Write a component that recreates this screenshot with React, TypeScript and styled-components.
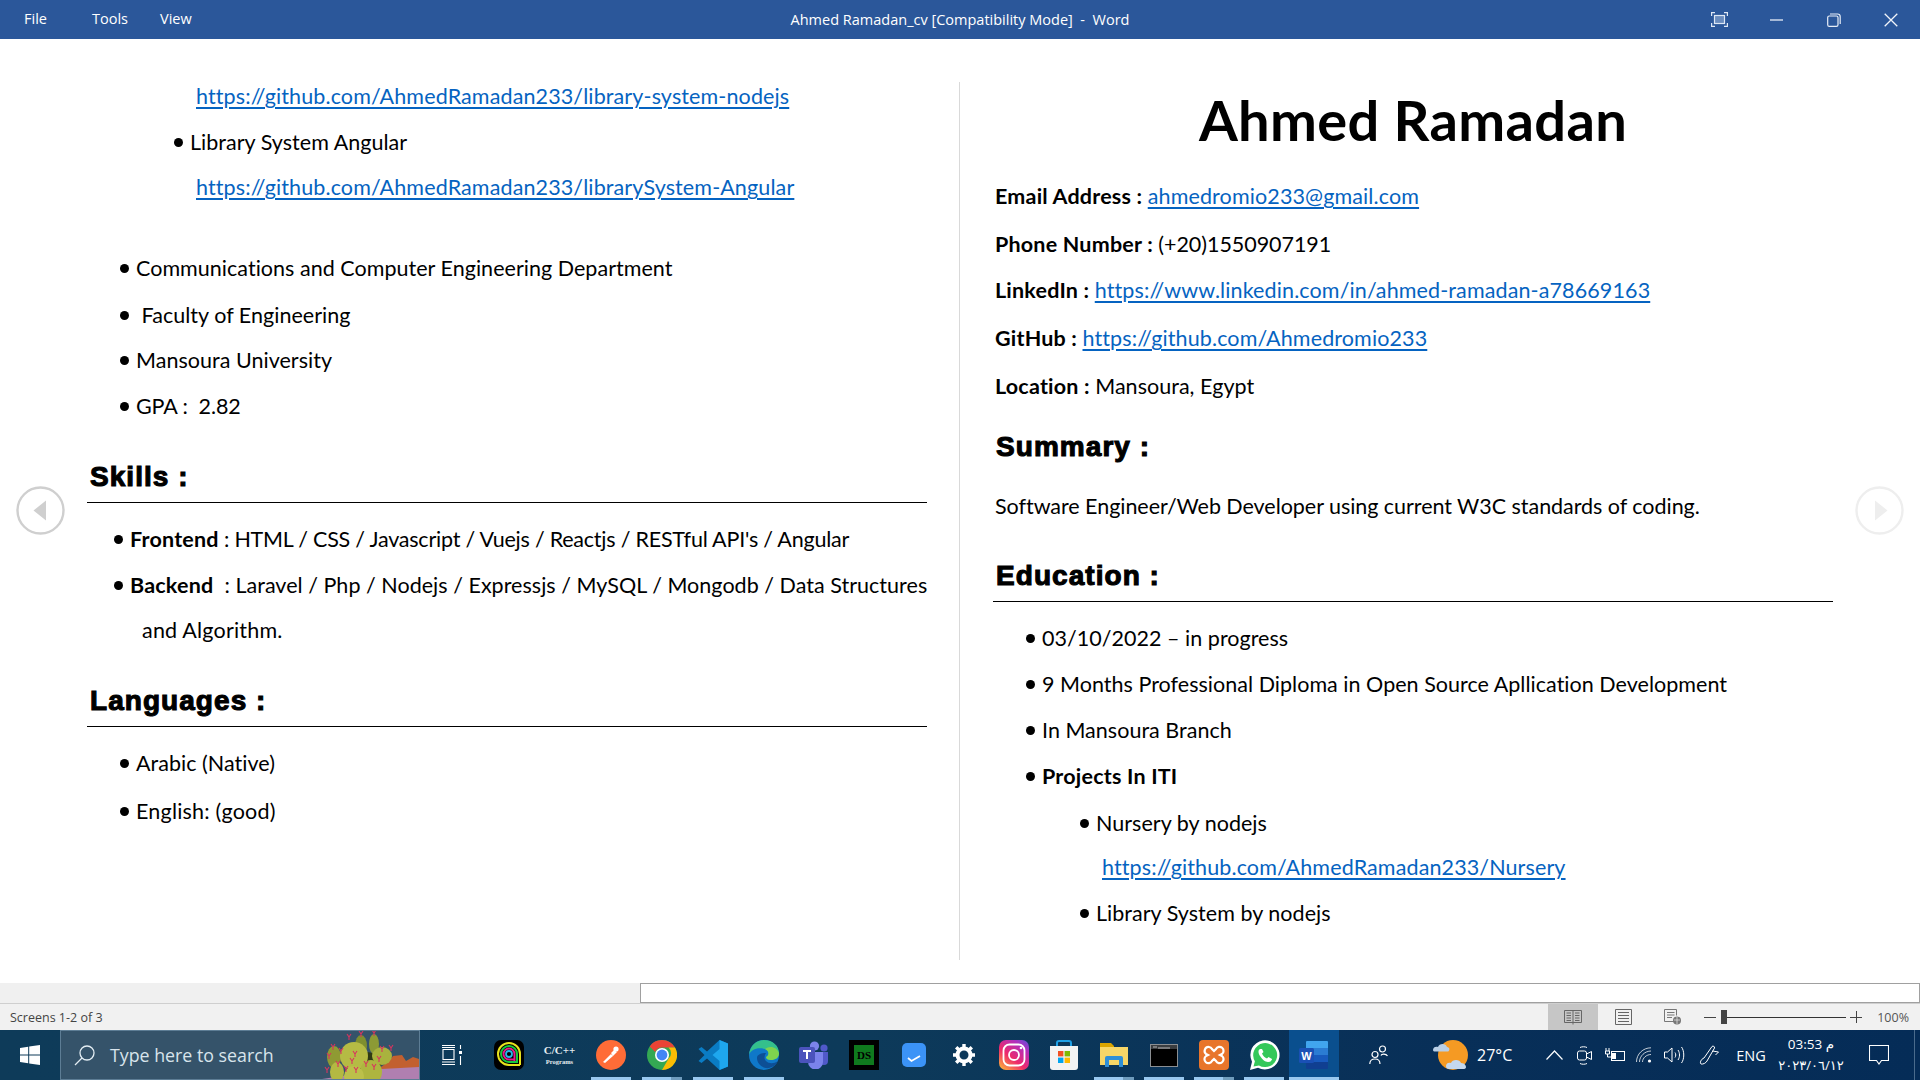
import React from 'react'
import styled, { createGlobalStyle } from 'styled-components'

const GlobalStyle = createGlobalStyle`
  html, body { margin: 0; padding: 0; background: #fff; overflow: hidden; }
  * { box-sizing: border-box; }
`

const Screen = styled.div`
  width: 1920px;
  height: 1080px;
  display: flex;
  flex-direction: column;
  position: relative;
  font-family: 'Open Sans', sans-serif;
`

const TitleBar = styled.div`
  height: 39px;
  flex: none;
  background: #2b579a;
  color: #fff;
  display: grid;
  grid-template-columns: 1fr auto 1fr;
  align-items: center;
  font-size: 14.5px;
`
const MenuRow = styled.div`
  display: flex;
  padding-left: 24px;
  margin-top: -2px;
`
const MenuItem = styled.span`
  width: 68px;
`
const DocTitle = styled.div`
  white-space: pre;
`
const WindowControls = styled.div`
  display: flex;
  justify-content: flex-end;
  padding-right: 1px;
`
const WindowButton = styled.div`
  width: 57px;
  height: 39px;
  display: flex;
  align-items: center;
  justify-content: center;
`

const Document = styled.div`
  flex: 1;
  display: flex;
  min-height: 0;
  position: relative;
`
const Page = styled.div<{ $left: number; $right: number; $top: number }>`
  padding: ${(p) => p.$top}px ${(p) => p.$right}px 0 ${(p) => p.$left}px;
  width: ${(p) => (p.$left > 50 ? 959 : 960)}px;
  flex: none;
`
const Divider = styled.div`
  width: 1px;
  flex: none;
  margin: 43px 0 23px;
  background: #d9d9d9;
`
const Title = styled.h1`
  margin: 0;
  height: 80px;
  line-height: 80px;
  text-align: center;
  font-family: 'Lato', sans-serif;
  font-weight: 700;
  font-size: 56px;
  letter-spacing: 0.35px;
  color: #000;
`
const Line = styled.div<{ $indent?: number; $gap?: number; $track?: number }>`
  height: 46px;
  line-height: 46px;
  display: flex;
  align-items: center;
  white-space: pre;
  padding-left: ${(p) => p.$indent ?? 2}px;
  margin-top: ${(p) => p.$gap ?? 0}px;
  font-family: 'Lato', sans-serif;
  font-size: 21.5px;
  letter-spacing: ${(p) => p.$track ?? 0.03}px;
  color: #000;
`
const Dot = styled.span`
  width: 9px;
  height: 9px;
  border-radius: 50%;
  background: #000;
  margin-right: 7px;
  flex: none;
`
const Bold = styled.b`
  font-weight: 700;
  letter-spacing: 0.2px;
`
const DocLink = styled.a`
  color: #0563c1;
  text-decoration: underline;
  text-decoration-thickness: 1.5px;
  text-underline-offset: 3px;
  letter-spacing: 0.12px;
  margin-left: 5px;
`
const PlainLink = styled(DocLink)`
  margin-left: 0;
`
const SectionHeading = styled.h2<{ $gap: number; $ruled?: boolean }>`
  margin: ${(p) => p.$gap}px 0 0;
  height: ${(p) => (p.$ruled ? 52 : 50)}px;
  line-height: 52px;
  padding-left: 3px;
  font-family: 'Liberation Sans', Arial, sans-serif;
  font-size: 28px;
  font-weight: 700;
  letter-spacing: 1.05px;
  -webkit-text-stroke: 1.1px #000;
  color: #000;
  border-bottom: ${(p) => (p.$ruled ? '1px solid #000' : 'none')};
`

const PageArrow = styled.div<{ $side: 'left' | 'right' }>`
  position: absolute;
  top: 447px;
  ${(p) => (p.$side === 'left' ? 'left: 16px;' : 'right: 16px;')}
  width: 49px;
  height: 49px;
`

const ScrollRow = styled.div`
  height: 20px;
  flex: none;
  background: #f0f0f0;
  display: flex;
  justify-content: flex-end;
`
const ScrollTrack = styled.div`
  width: 1280px;
  background: #fff;
  border: 1px solid #a0a0a0;
`

const StatusBar = styled.div`
  height: 27px;
  flex: none;
  background: #f1f1f1;
  border-top: 1px solid #cfcfcf;
  display: flex;
  align-items: center;
  font-size: 12.5px;
  color: #444;
`
const StatusText = styled.div`
  padding-left: 10px;
  margin-right: auto;
`
const ViewButton = styled.div<{ $active?: boolean }>`
  width: 50px;
  height: 26px;
  flex: none;
  display: flex;
  align-items: center;
  justify-content: center;
  background: ${(p) => (p.$active ? '#c6c6c6' : 'transparent')};
`
const ZoomGroup = styled.div`
  display: flex;
  flex: none;
  align-items: center;
  margin-left: 6px;
  color: #444;
`
const ZoomSign = styled.span`
  width: 12px;
  height: 1px;
  background: #444;
  position: relative;
`
const ZoomPlus = styled(ZoomSign)`
  margin-left: 4px;
  &::after {
    content: '';
    position: absolute;
    left: 5.5px;
    top: -5.5px;
    width: 1px;
    height: 12px;
    background: #444;
  }
`
const ZoomThumb = styled.span`
  width: 6px;
  height: 14px;
  background: #444;
  margin-left: 5px;
`
const ZoomTrack = styled.span`
  width: 119px;
  height: 1px;
  background: #333;
`
const ZoomValue = styled.span`
  width: 58px;
  text-align: right;
  padding-right: 11px;
  font-size: 12.5px;
  color: #555;
`

const Taskbar = styled.div`
  height: 50px;
  flex: none;
  display: flex;
  align-items: stretch;
  background: linear-gradient(90deg, #0e3b59 0%, #0d3a5a 45%, #082f58 75%, #052c57 100%);
  color: #fff;
`
const StartButton = styled.div`
  width: 60px;
  flex: none;
  display: flex;
  align-items: center;
  justify-content: center;
`
const SearchBox = styled.div`
  width: 360px;
  flex: none;
  position: relative;
  overflow: hidden;
  display: flex;
  align-items: center;
  padding-left: 13px;
  gap: 15px;
  background: #35536a;
  border: 1px solid #5d7d95;
  font-size: 17.8px;
  color: #d8e4ec;
`
const CactusArt = styled.svg`
  position: absolute;
  right: 0;
  top: 0;
`
const TaskTile = styled.div<{ $w?: number; $run?: 'one' | 'stack'; $active?: boolean }>`
  width: ${(p) => p.$w ?? 50}px;
  flex: none;
  display: flex;
  align-items: center;
  justify-content: center;
  position: relative;
  background: ${(p) => (p.$active ? '#0a4f8e' : 'transparent')};
  &::after {
    content: ${(p) => (p.$run || p.$active ? "''" : 'none')};
    position: absolute;
    bottom: 0;
    left: ${(p) => (p.$active ? '0' : 'calc(50% - 20px)')};
    width: ${(p) => (p.$active ? '100%' : '40px')};
    height: 3px;
    background: ${(p) =>
      p.$run === 'stack' ? 'linear-gradient(90deg, #99c8ef 73%, #6f9cbd 73%)' : '#99c8ef'};
  }
`
const CppLabel = styled.div`
  font-family: 'Liberation Serif', serif;
  text-align: center;
  font-weight: 700;
  line-height: 1;
  color: #e7edf1;
  font-size: 11px;
`
const CppSmall = styled.div`
  font-size: 6.5px;
  margin-top: 3px;
`
const TrayTile = styled.div<{ $w: number; $ml?: number }>`
  width: ${(p) => p.$w}px;
  margin-left: ${(p) => p.$ml ?? 0}px;
  flex: none;
  display: flex;
  align-items: center;
  justify-content: center;
  font-size: 14.5px;
`
const TempText = styled(TrayTile)`
  justify-content: flex-start;
  padding-left: 7px;
  font-size: 16px;
`
const Clock = styled(TrayTile)`
  flex-direction: column;
  font-size: 13.5px;
  line-height: 21px;
  font-family: 'Open Sans', 'DejaVu Sans', sans-serif;
`
const ClockDate = styled.span`
  direction: ltr;
  unicode-bidi: plaintext;
  font-size: 13px;
`
const ShowDesktop = styled.div`
  width: 6px;
  flex: none;
  margin-left: 5px;
  border-left: 1px solid #4a6b8c;
`

const Capture = () => (
  <svg width="17" height="15" viewBox="0 0 17 15" fill="none" stroke="#dfe8f5" strokeWidth="1.2">
    <rect x="3.5" y="3.5" width="10" height="8" fill="#a9c1e2" fillOpacity=".5" />
    <path d="M.6 4V.6H4M13 .6h3.4V4M16.4 11v3.4H13M4 14.4H.6V11" />
  </svg>
)
const Minimize = () => (
  <svg width="14" height="4" viewBox="0 0 14 4">
    <path d="M0 2h13" stroke="#e8eef7" strokeWidth="1.3" />
  </svg>
)
const Restore = () => (
  <svg width="14" height="14" viewBox="0 0 14 14" fill="none" stroke="#e8eef7" strokeWidth="1.2">
    <rect x=".7" y="3" width="10.3" height="10.3" rx="1.6" />
    <path d="M3 1h7.5A2.7 2.7 0 0 1 13.2 3.7V11" />
  </svg>
)
const CloseIcon = () => (
  <svg width="14" height="14" viewBox="0 0 14 14" stroke="#f2f5fa" strokeWidth="1.3">
    <path d="M.7.7l12.6 12.6M13.3.7L.7 13.3" />
  </svg>
)

const ArrowGlyph = ({ dir, tone }: { dir: 'left' | 'right'; tone: string }) => (
  <svg width="49" height="49" viewBox="0 0 49 49" fill="none">
    <circle cx="24.5" cy="24.5" r="23" stroke={tone} strokeWidth="2.4" />
    <path d={dir === 'left' ? 'M30 14.5v20L17.5 24.5z' : 'M20 14.5v20l12.5-10z'} fill={tone} />
  </svg>
)

const BookView = () => (
  <svg width="18" height="16" viewBox="0 0 18 16" fill="none" stroke="#666">
    <path d="M.5 1.5h17v12H.5zM9 1.5v14M2.5 4h4.5M2.5 6.5h4.5M2.5 9h4.5M2.5 11.5h4.5M11 4h4.5M11 6.5h4.5M11 9h4.5M11 11.5h4.5" />
  </svg>
)
const PrintView = () => (
  <svg width="17" height="16" viewBox="0 0 17 16" fill="none" stroke="#666">
    <path d="M.5.5h16v15H.5zM3 3.5h11M3 6.5h11M3 9.5h11M3 12.5h11" />
  </svg>
)
const WebView = () => (
  <svg width="18" height="16" viewBox="0 0 18 16" fill="none" stroke="#777">
    <path d="M12 12.5H.5V.5h12v6M3 3.5h7.5M3 6h7.5M3 8.5h5" />
    <circle cx="13" cy="11.5" r="4" fill="#777" stroke="none" />
    <path d="M10 11h6M13 8v7" stroke="#eee" strokeWidth=".7" />
  </svg>
)

const WindowsLogo = () => (
  <svg width="20" height="20" viewBox="0 0 20 20" fill="#fff">
    <path d="M0 2.9l8.2-1.1v7.7H0zM9.2 1.6L20 0v9.5H9.2zM0 10.5h8.2v7.7L0 17.1zM9.2 10.5H20V20L9.2 18.4z" />
  </svg>
)
const SearchGlyph = () => (
  <svg width="21" height="21" viewBox="0 0 21 21" fill="none" stroke="#e3edf3" strokeWidth="1.3">
    <circle cx="13" cy="8" r="7" />
    <path d="M8 13L1 20" />
  </svg>
)
const Cactus = () => {
  const pads: [number, number, number, number, string][] = [
    [42, 17, 6, 11, '#7f8f2f'],
    [55, 15, 5, 10, '#8c9a35'],
    [15, 28, 7, 11, '#8f9a33'],
    [63, 27, 10, 9, '#a9b23e'],
    [35, 27, 14, 14, '#b5bb44'],
    [52, 43, 11, 12, '#aeb53f'],
    [18, 43, 7, 10, '#b4b942'],
    [35, 47, 10, 10, '#bcc04a'],
  ]
  const thorns = [
    [30, 8], [42, 5], [55, 4], [14, 18], [10, 27], [22, 22], [36, 25], [33, 32], [63, 20], [72, 19],
    [60, 30], [47, 35], [19, 35], [8, 41], [37, 41], [27, 40], [55, 38],
  ]
  return (
    <CactusArt width="100" height="48" viewBox="0 2 100 48">
      <path d="M3 50L30 46l30-8 40-2v14z" fill="#b07fb0" />
      <path d="M62 38l8-6 4-5 9-1 4 6 7-4 6 2v8l-38 2z" fill="#c2602f" />
      <path d="M28 20l40 6-10 18H28z" fill="#2f3a14" />
      {pads.map(([cx, cy, rx, ry, fill]) => (
        <ellipse key={`${cx}-${cy}`} cx={cx} cy={cy} rx={rx} ry={ry} fill={fill} />
      ))}
      {thorns.map(([x, y]) => (
        <path key={`${x}-${y}`} d={`M${x} ${y}l-2-3M${x} ${y}l2-3M${x} ${y}v3`} stroke="#d8345f" strokeWidth="1.1" />
      ))}
    </CactusArt>
  )
}
const TaskViewGlyph = () => (
  <svg width="20" height="20" viewBox="0 0 20 20" fill="none" stroke="#fff" strokeWidth="1.1">
    <path d="M0 .5h13M0 19.5h13M1 4.5h11v10H1zM0 17h13M0 2.5h13" />
    <rect x="17" y="6" width="3" height="3" fill="#fff" stroke="none" />
    <path d="M18.5 0v4M18.5 11v9" />
  </svg>
)
const RingsLogo = () => (
  <svg width="30" height="30" viewBox="0 0 30 30" fill="none">
    <rect width="30" height="30" rx="7" fill="#000" />
    <path d="M26 25V14a11 11 0 1 0-11 11h11" stroke="#e7e31c" strokeWidth="2" />
    <path d="M23 23V14a8 8 0 1 0-8 8h8" stroke="#16c83c" strokeWidth="2" />
    <path d="M20.5 21V14a5.5 5.5 0 1 0-5.5 5.5h5.5" stroke="#e81a8c" strokeWidth="2" />
    <circle cx="15" cy="14" r="3" stroke="#27b6e8" strokeWidth="1.8" />
  </svg>
)
const PostmanLogo = () => (
  <svg width="30" height="30" viewBox="0 0 30 30">
    <circle cx="15" cy="15" r="15" fill="#ff6c37" />
    <path d="M7 22l8-8 2 2-8 7zM15 13l3-3 3 2-4 4z" fill="#fff" />
    <circle cx="20" cy="9" r="2.6" fill="#fff" />
  </svg>
)
const ChromeLogo = () => (
  <svg width="30" height="30" viewBox="0 0 30 30">
    <circle cx="15" cy="15" r="15" fill="#34a853" />
    <path d="M15 0a15 15 0 0 1 13 7.5H15a7.5 7.5 0 0 0-6.8 4.4L2.7 6.4A15 15 0 0 1 15 0z" fill="#ea4335" />
    <path d="M28 7.5A15 15 0 0 1 15 30l6.5-11.2a7.5 7.5 0 0 0 0-11.3z" fill="#fbbc04" />
    <circle cx="15" cy="15" r="7" fill="#fff" />
    <circle cx="15" cy="15" r="5.4" fill="#4285f4" />
  </svg>
)
const VsCodeLogo = () => (
  <svg width="30" height="30" viewBox="0 0 30 30">
    <path d="M21.5 0L30 3.5v23L21.5 30 9 18.5 3.5 23 .5 21l6-6-6-6 3-2L9 11.5z" fill="#0a7cc4" />
    <path d="M21.5 0L30 3.5v23L21.5 30V21l-7-6 7-6z" fill="#1ea7ee" />
  </svg>
)
const EdgeLogo = () => (
  <svg width="30" height="30" viewBox="0 0 30 30">
    <circle cx="15" cy="15" r="15" fill="#0f78c9" />
    <path d="M0 15C1 5 8 0 15 0c9 0 15 6 15 13 0 5-4 7-8 7-3 0-5-1-5-3 3-1 4-6-1-8C9 7 2 9 0 15z" fill="#34c08c" />
    <path d="M30 13c0 5-4 7-8 7-3 0-5-1-5-3 3-1 4-6-1-8 5-4 12-2 14 4z" fill="#7fd34e" />
    <path d="M8 18c0 6 6 11 12 10 4-1 7-3 9-7-4 3-9 3-12 0-2-2-2-5 0-8-5 0-9 2-9 5z" fill="#0d4f96" />
  </svg>
)
const TeamsLogo = () => (
  <svg width="30" height="28" viewBox="0 0 30 28">
    <circle cx="25" cy="7" r="3.6" fill="#5059c9" />
    <circle cx="15.5" cy="5" r="4.6" fill="#7b83eb" />
    <path d="M21 11h8v9a4 4 0 0 1-8 0z" fill="#5059c9" />
    <path d="M9 11h15v10a7 7 0 0 1-15 0z" fill="#7b83eb" />
    <rect y="6" width="16" height="16" rx="2" fill="#4b53bc" />
    <path d="M4 10h8M8 10v8" stroke="#fff" strokeWidth="2" />
  </svg>
)
const DsLogo = () => (
  <svg width="30" height="30" viewBox="0 0 30 30">
    <rect width="30" height="30" fill="#000" />
    <rect x="5" y="5" width="20" height="20" fill="#0f7a1e" />
    <text x="15" y="19" textAnchor="middle" fontFamily="Liberation Serif" fontWeight="700" fontSize="11" fill="#000">DS</text>
  </svg>
)
const CheckLogo = () => (
  <svg width="24" height="24" viewBox="0 0 24 24">
    <rect width="24" height="24" rx="5" fill="#3b93f7" />
    <path d="M6 15l3.5 3L18 13" stroke="#fff" strokeWidth="1.8" fill="none" />
  </svg>
)
const GearGlyph = () => (
  <svg width="24" height="24" viewBox="0 0 24 24">
    <circle cx="12" cy="12" r="6.5" fill="none" stroke="#fff" strokeWidth="4" />
    <path d="M12 1v5M12 18v5M1 12h5M18 12h5M4.2 4.2l3.6 3.6M16.2 16.2l3.6 3.6M4.2 19.8l3.6-3.6M16.2 7.8l3.6-3.6" stroke="#fff" strokeWidth="3.4" />
  </svg>
)
const InstagramLogo = () => (
  <svg width="30" height="30" viewBox="0 0 30 30" fill="none">
    <defs>
      <linearGradient id="ig" x1="0.1" y1="1" x2="0.9" y2="0">
        <stop offset="0" stopColor="#fdb13c" />
        <stop offset=".4" stopColor="#ee2a6a" />
        <stop offset=".8" stopColor="#b02fbe" />
        <stop offset="1" stopColor="#6a4fd6" />
      </linearGradient>
    </defs>
    <rect width="30" height="30" rx="7" fill="url(#ig)" />
    <rect x="4.5" y="4.5" width="21" height="21" rx="6" stroke="#fff" strokeWidth="1.8" />
    <circle cx="15" cy="15" r="5" stroke="#fff" strokeWidth="1.8" />
    <circle cx="22" cy="8" r="1.3" fill="#fff" />
  </svg>
)
const StoreLogo = () => (
  <svg width="30" height="30" viewBox="0 0 30 30">
    <path d="M8 6V3a2 2 0 0 1 2-2h10a2 2 0 0 1 2 2v3" fill="none" stroke="#1fa0e6" strokeWidth="2" />
    <path d="M1 6h28v21a3 3 0 0 1-3 3H4a3 3 0 0 1-3-3z" fill="#f3f3f3" />
    <rect x="9" y="11" width="5.4" height="5.4" fill="#f25022" />
    <rect x="15.6" y="11" width="5.4" height="5.4" fill="#7fba00" />
    <rect x="9" y="17.6" width="5.4" height="5.4" fill="#00a4ef" />
    <rect x="15.6" y="17.6" width="5.4" height="5.4" fill="#ffb900" />
  </svg>
)
const ExplorerLogo = () => (
  <svg width="28" height="24" viewBox="0 0 28 24">
    <path d="M0 0h11l3 3v8H0z" fill="#d9a400" />
    <path d="M0 4h28v18H0z" fill="#f7d667" />
    <path d="M5 24v-9a2 2 0 0 1 2-2h14a2 2 0 0 1 2 2v9h-4v-7H9v7z" fill="#2f8fd6" />
  </svg>
)
const CmdLogo = () => (
  <svg width="28" height="23" viewBox="0 0 28 23">
    <rect width="28" height="23" fill="#8b8f93" />
    <rect x="1" y="1" width="26" height="4" fill="#3a3d40" />
    <rect x="1" y="5" width="26" height="17" fill="#000" />
    <path d="M3 3h4M8 4h12" stroke="#b8b8b8" strokeWidth="1" />
  </svg>
)
const XamppLogo = () => (
  <svg width="30" height="30" viewBox="0 0 30 30" fill="none">
    <rect width="30" height="30" rx="4" fill="#e8752b" />
    <path d="M10 7a4 4 0 0 0-3 7l2 1-2 1a4 4 0 1 0 6 5l2-2 2 2a4 4 0 1 0 6-5l-2-1 2-1a4 4 0 1 0-6-5l-2 2-2-2a4 4 0 0 0-3-2z" stroke="#fff" strokeWidth="2.2" />
  </svg>
)
const WhatsappLogo = () => (
  <svg width="31" height="31" viewBox="0 0 31 31">
    <path d="M1 30l2-8.3A14.6 14.6 0 1 1 9 27.8z" fill="#fff" />
    <path d="M4.5 26.5l1.4-5.2A12 12 0 1 1 10 25.4z" fill="#34c85a" />
    <path d="M11 9c-2 1-2 4 0 7s5 6 8 6 4-2 4-3l-3.5-2-1.5 1.5c-2-.5-4-2.5-5-5L14.5 12 13 9z" fill="#fff" />
  </svg>
)
const WordLogo = () => (
  <svg width="30" height="28" viewBox="0 0 30 28">
    <path d="M8 0h20a1 1 0 0 1 1 1v6H7V1a1 1 0 0 1 1-1z" fill="#41a5ee" />
    <rect x="7" y="7" width="22" height="7" fill="#2b7cd3" />
    <rect x="7" y="14" width="22" height="7" fill="#185abd" />
    <path d="M7 21h22v6a1 1 0 0 1-1 1H8a1 1 0 0 1-1-1z" fill="#103f91" />
    <rect y="7" width="15" height="15" rx="1.5" fill="#1a50b5" />
    <text x="7.5" y="19" textAnchor="middle" fontFamily="Liberation Sans" fontWeight="700" fontSize="11" fill="#fff">W</text>
  </svg>
)
const PeopleGlyph = () => (
  <svg width="20" height="20" viewBox="0 0 20 20" fill="none" stroke="#fff" strokeWidth="1.2">
    <circle cx="13.5" cy="4" r="3" />
    <circle cx="6" cy="9.5" r="3" />
    <path d="M.8 19c0-3 2-5 5.2-5s5 2 5 5M12 10.5c.6-2 5-2 6.5.5" />
  </svg>
)
const WeatherGlyph = () => (
  <svg width="36" height="34" viewBox="0 0 36 34">
    <circle cx="21" cy="17" r="15" fill="#f59a23" />
    <path d="M1 12c0-3 3-4 5-3 1-4 8-4 9 0 3 0 3 4 1 4.5H3c-1 0-2-.5-2-1.5z" fill="#b9cfe6" />
    <path d="M14 28c0-3 3-4 5-3 1-4 9-4 10 0 4 0 5 3 5 4 0 1.5-1 2-3 2H17c-2 0-3-1-3-3z" fill="#c4d8ee" />
  </svg>
)
const ChevronGlyph = () => (
  <svg width="17" height="10" viewBox="0 0 17 10" fill="none" stroke="#fff" strokeWidth="1.2">
    <path d="M.5 9.5L8.5 1l8 8.5" />
  </svg>
)
const CameraGlyph = () => (
  <svg width="15" height="19" viewBox="0 0 15 19" fill="none" stroke="#fff" strokeWidth="1">
    <rect x=".5" y="5" width="9" height="9" rx="2" />
    <path d="M9.5 8l5-2.5v8l-5-2.5M3 1.5c2-1 5-1 7 0M3 17.5c2 1 5 1 7 0" />
  </svg>
)
const BatteryGlyph = () => (
  <svg width="20" height="14" viewBox="0 0 20 14" fill="none" stroke="#fff" strokeWidth="1">
    <rect x="6.5" y="3.5" width="13" height="9" />
    <rect x="7" y="5" width="4" height="6" fill="#fff" stroke="none" />
    <path d="M1 0v3M4 0v3M.5 3h4v3h-4zM2.5 6v3h4" />
  </svg>
)
const WifiGlyph = () => (
  <svg width="16" height="16" viewBox="0 0 16 16" fill="none" stroke="#fff" strokeWidth="1">
    <path d="M.5 15C.5 7 7 .8 15 .8M3.5 15C3.5 9 9 4 15 4M6.5 15C6.5 11 10.5 7.5 15 7.5" opacity=".75" />
    <circle cx="13.5" cy="14" r="1.6" fill="#fff" stroke="none" />
  </svg>
)
const SpeakerGlyph = () => (
  <svg width="21" height="18" viewBox="0 0 21 18" fill="none" stroke="#fff" strokeWidth="1">
    <path d="M.5 6h3L8 2v14l-4.5-4h-3zM11 6.5c1 1.5 1 3.5 0 5M14 4c2 3 2 7 0 10M17.5 1c3 4 3 12 0 16" />
  </svg>
)
const PenGlyph = () => (
  <svg width="20" height="20" viewBox="0 0 20 20" fill="none" stroke="#fff" strokeWidth="1">
    <path d="M5 13L13 1.5c1-1 3 0 2.5 1.5L8 16c-1 2-4 3.5-6 3-1.5-1 0-5 3-6zM13.5 6l6 1-3 3" />
  </svg>
)
const NotifyGlyph = () => (
  <svg width="20" height="20" viewBox="0 0 20 20" fill="none" stroke="#fff" strokeWidth="1.1">
    <path d="M.5.5h19v15h-7L10 19l-2.5-3.5h-7z" />
  </svg>
)

const TaskIcons: { key: string; node: React.ReactNode; w?: number; run?: 'one' | 'stack'; active?: boolean }[] = [
  { key: 'rings', node: <RingsLogo />, w: 51 },
  { key: 'cpp', node: <CppLabel>C/C++<CppSmall>Programs</CppSmall></CppLabel>, w: 51 },
  { key: 'postman', node: <PostmanLogo />, w: 51, run: 'one' },
  { key: 'chrome', node: <ChromeLogo />, w: 51, run: 'stack' },
  { key: 'vscode', node: <VsCodeLogo />, w: 51, run: 'one' },
  { key: 'edge', node: <EdgeLogo />, w: 51, run: 'one' },
  { key: 'teams', node: <TeamsLogo /> },
  { key: 'ds', node: <DsLogo /> },
  { key: 'check', node: <CheckLogo /> },
  { key: 'gear', node: <GearGlyph /> },
  { key: 'instagram', node: <InstagramLogo /> },
  { key: 'store', node: <StoreLogo /> },
  { key: 'explorer', node: <ExplorerLogo />, run: 'stack' },
  { key: 'cmd', node: <CmdLogo />, run: 'one' },
  { key: 'xampp', node: <XamppLogo />, run: 'stack' },
  { key: 'whatsapp', node: <WhatsappLogo />, run: 'one' },
  { key: 'word', node: <WordLogo />, active: true },
]

const App = () => (
  <>
    <GlobalStyle />
    <Screen>
      <TitleBar>
        <MenuRow>
          <MenuItem>File</MenuItem>
          <MenuItem>Tools</MenuItem>
          <MenuItem>View</MenuItem>
        </MenuRow>
        <DocTitle>{'Ahmed Ramadan_cv [Compatibility Mode]  -  Word'}</DocTitle>
        <WindowControls>
          <WindowButton><Capture /></WindowButton>
          <WindowButton><Minimize /></WindowButton>
          <WindowButton><Restore /></WindowButton>
          <WindowButton><CloseIcon /></WindowButton>
        </WindowControls>
      </TitleBar>

      <Document>
        <Page $left={87} $right={32} $top={34}>
          <Line $indent={104}><DocLink>https://github.com/AhmedRamadan233/library-system-nodejs</DocLink></Line>
          <Line $indent={87}><Dot />Library System Angular</Line>
          <Line $indent={104} $gap={-1}><DocLink>https://github.com/AhmedRamadan233/librarySystem-Angular</DocLink></Line>
          <Line $indent={33} $gap={35}><Dot />Communications and Computer Engineering Department</Line>
          <Line $indent={33} $gap={1}><Dot /> Faculty of Engineering</Line>
          <Line $indent={33} $gap={-1}><Dot />Mansoura University</Line>
          <Line $indent={33} $track={-0.1}><Dot />GPA :  2.82</Line>
          <SectionHeading $gap={22} $ruled>Skills :</SectionHeading>
          <Line $indent={27} $gap={13} $track={-0.22}><Dot /><Bold>Frontend</Bold> : HTML / CSS / Javascript / Vuejs / Reactjs / RESTful API's / Angular</Line>
          <Line $indent={27}><Dot /><Bold>Backend</Bold>  : Laravel / Php / Nodejs / Expressjs / MySQL / Mongodb / Data Structures</Line>
          <Line $indent={55} $gap={-1} $track={0.2}>and Algorithm.</Line>
          <SectionHeading $gap={22} $ruled>Languages :</SectionHeading>
          <Line $indent={33} $gap={13}><Dot />Arabic (Native)</Line>
          <Line $indent={33} $gap={2} $track={0.2}><Dot />English: (good)</Line>
        </Page>
        <Divider />
        <Page $left={33} $right={87} $top={41}>
          <Title>Ahmed Ramadan</Title>
          <Line $gap={13}><Bold>Email Address : </Bold><PlainLink>ahmedromio233@gmail.com</PlainLink></Line>
          <Line $gap={2} $track={-0.05}><Bold>Phone Number : </Bold>(+20)1550907191</Line>
          <Line><Bold>LinkedIn : </Bold><PlainLink>https://www.linkedin.com/in/ahmed-ramadan-a78669163</PlainLink></Line>
          <Line $gap={2}><Bold>GitHub : </Bold><PlainLink>https://github.com/Ahmedromio233</PlainLink></Line>
          <Line $gap={2}><Bold>Location : </Bold>Mansoura, Egypt</Line>
          <SectionHeading $gap={12}>Summary :</SectionHeading>
          <Line $gap={12} $track={-0.04}>Software Engineer/Web Developer using current W3C standards of coding.</Line>
          <SectionHeading $gap={21} $ruled>Education :</SectionHeading>
          <Line $indent={33} $gap={13}><Dot />03/10/2022 – in progress</Line>
          <Line $indent={33}><Dot />9 Months Professional Diploma in Open Source Apllication Development</Line>
          <Line $indent={33}><Dot />In Mansoura Branch</Line>
          <Line $indent={33}><Dot /><Bold>Projects In ITI</Bold></Line>
          <Line $indent={87} $gap={1}><Dot />Nursery by nodejs</Line>
          <Line $indent={104} $gap={-2}><DocLink>https://github.com/AhmedRamadan233/Nursery</DocLink></Line>
          <Line $indent={87}><Dot />Library System by nodejs</Line>
        </Page>
        <PageArrow $side="left"><ArrowGlyph dir="left" tone="#cfcfcf" /></PageArrow>
        <PageArrow $side="right"><ArrowGlyph dir="right" tone="#eeeeee" /></PageArrow>
      </Document>

      <ScrollRow><ScrollTrack /></ScrollRow>

      <StatusBar>
        <StatusText>Screens 1-2 of 3</StatusText>
        <ViewButton $active><BookView /></ViewButton>
        <ViewButton><PrintView /></ViewButton>
        <ViewButton><WebView /></ViewButton>
        <ZoomGroup>
          <ZoomSign />
          <ZoomThumb />
          <ZoomTrack />
          <ZoomPlus />
          <ZoomValue>100%</ZoomValue>
        </ZoomGroup>
      </StatusBar>

      <Taskbar>
        <StartButton><WindowsLogo /></StartButton>
        <SearchBox>
          <SearchGlyph />
          Type here to search
          <Cactus />
        </SearchBox>
        <TaskTile $w={63}><TaskViewGlyph /></TaskTile>
        {TaskIcons.map((icon) => (
          <TaskTile key={icon.key} $w={icon.w} $run={icon.run} $active={icon.active}>{icon.node}</TaskTile>
        ))}
        <TrayTile $w={50} $ml={15}><PeopleGlyph /></TrayTile>
        <TrayTile $w={40} $ml={26}><WeatherGlyph /></TrayTile>
        <TempText $w={70}>27°C</TempText>
        <TrayTile $w={28}><ChevronGlyph /></TrayTile>
        <TrayTile $w={32}><CameraGlyph /></TrayTile>
        <TrayTile $w={29}><BatteryGlyph /></TrayTile>
        <TrayTile $w={30}><WifiGlyph /></TrayTile>
        <TrayTile $w={30}><SpeakerGlyph /></TrayTile>
        <TrayTile $w={40}><PenGlyph /></TrayTile>
        <TrayTile $w={44}>ENG</TrayTile>
        <Clock $w={76}>
          <span>03:53 م</span>
          <ClockDate>٢٠٢٣/٠٦/١٢</ClockDate>
        </Clock>
        <TrayTile $w={60}><NotifyGlyph /></TrayTile>
        <ShowDesktop />
      </Taskbar>
    </Screen>
  </>
)

export default App
